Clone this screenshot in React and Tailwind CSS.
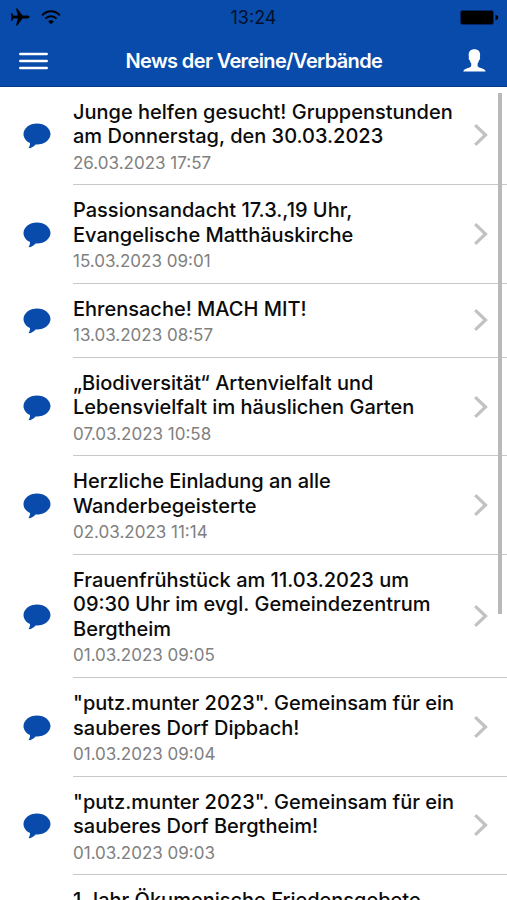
import React from "react";

const news = [
  { lines: ["Junge helfen gesucht! Gruppenstunden", "am Donnerstag, den 30.03.2023"], date: "26.03.2023 17:57" },
  { lines: ["Passionsandacht 17.3.,19 Uhr,", "Evangelische Matthäuskirche"], date: "15.03.2023 09:01" },
  { lines: ["Ehrensache! MACH MIT!"], date: "13.03.2023 08:57" },
  { lines: ["„Biodiversität“ Artenvielfalt und", "Lebensvielfalt im häuslichen Garten"], date: "07.03.2023 10:58" },
  { lines: ["Herzliche Einladung an alle", "Wanderbegeisterte"], date: "02.03.2023 11:14" },
  { lines: ["Frauenfrühstück am 11.03.2023 um", "09:30 Uhr im evgl. Gemeindezentrum", "Bergtheim"], date: "01.03.2023 09:05" },
  { lines: ['"putz.munter 2023". Gemeinsam für ein', "sauberes Dorf Dipbach!"], date: "01.03.2023 09:04" },
  { lines: ['"putz.munter 2023". Gemeinsam für ein', "sauberes Dorf Bergtheim!"], date: "01.03.2023 09:03" },
  { lines: ["1 Jahr Ökumenische Friedensgebete"] },
];

function PlaneIcon() {
  return (
    <svg width="20" height="18" viewBox="0 0 20 18" fill="#000">
      <path d="M19.600 9c0-.8-1.200-1.400-2.400-1.400h-4.700L7.300.5H5.900l2 7.100-4.100.2L2.100 5.200H.9L1.700 9l-.8 3.800h1.200l1.700-2.600 4.100.2-2 7.100h1.400l5.200-7.100h4.700c1.200 0 2.400-.6 2.400-1.400z" />
    </svg>
  );
}

function WifiIcon() {
  return (
    <svg width="20" height="15" viewBox="0 0 20 15" fill="none" stroke="#000" strokeWidth="2">
      <path d="M1.200 5.300C6-.1 14-.1 18.800 5.300" />
      <path d="M4.400 8.600c3.200-3.200 8-3.200 11.200 0" />
      <path d="M10 14.300 7.200 11.400c1.500-1.400 4.100-1.400 5.600 0z" fill="#000" stroke="none" />
    </svg>
  );
}

function BatteryIcon() {
  return (
    <svg width="39" height="15" viewBox="0 0 39 15">
      <rect x="0.500" y="0.500" width="33" height="14" rx="2" fill="#000" stroke="#06266a" />
      <path d="M35.500 4.700c1.500.3 2.800 1.500 2.800 2.800s-1.300 2.500-2.800 2.800z" fill="#000" />
    </svg>
  );
}

function MenuIcon() {
  return (
    <svg width="29" height="18" viewBox="0 0 29 18" stroke="#fff" strokeWidth="2.500" strokeLinecap="round">
      <path d="M1.300 2h26.400M1.300 9h26.400M1.300 16h26.400" />
    </svg>
  );
}

function UserIcon() {
  return (
    <svg className="-mt-px" width="23" height="23" viewBox="0 0 23 23" fill="#fff">
      <path d="M11.400.3c3.700 0 5.700 2.100 5.700 5.400 0 1.500-.1 2.100-.3 3 .7.400.3 1.900-.6 2.400-.4 1.500-.9 2.600-1.600 3.400v2.500c.5 1.600 3.600 2 5.800 3 1.300.6 2 1.400 2.200 2.500H.3c.2-1.100.9-1.900 2.200-2.500 2.200-1 5.200-1.400 5.700-3v-2.500c-.7-.8-1.200-1.900-1.600-3.400-.9-.5-1.300-2-.6-2.400-.2-.9-.3-1.500-.3-3C5.700 2.400 7.700.3 11.400.3z" />
    </svg>
  );
}

function BubbleIcon() {
  return (
    <svg width="28" height="26" viewBox="0 0 28 26" fill="#084bab">
      <path d="M14 .5C6.500.5.500 5.200.500 11c0 3.900 2.500 7.200 6.500 9 .2 1.800-.5 3.600-1.500 5.200 3.200-.3 5.200-1.700 7-3.800l1.500.1c7.500 0 13.500-4.700 13.500-10.500S21.500.5 14 .5z" />
    </svg>
  );
}

function Chevron() {
  return (
    <svg width="14" height="22" viewBox="0 0 14 22" fill="none" stroke="#c2c2c2" strokeWidth="3.200">
      <path d="M1.200 1.200 11.500 11 1.200 20.800" />
    </svg>
  );
}

function NewsRow({ item }) {
  return (
    <li className="flex">
      <div className="flex w-[73px] shrink-0 items-center pt-px pl-[23px]">
        {item.date && <BubbleIcon />}
      </div>
      <div className="flex flex-1 items-center border-b border-[#c8c8c8]">
        <div className="flex-1 whitespace-nowrap pt-[13px] pb-[10px]">
          {item.lines.map((line) => (
            <div key={line} className="text-[20px] leading-[24.500px] font-medium text-[#0b0b0b]">
              {line}
            </div>
          ))}
          {item.date && (
            <div className="mt-[4px] text-[17px] leading-[21.600px] text-[#808080]">{item.date}</div>
          )}
        </div>
        <div className="w-[33px] shrink-0">{item.date && <Chevron />}</div>
      </div>
    </li>
  );
}

export default function App() {
  return (
    <div className="relative flex h-[900px] w-[507px] flex-col overflow-hidden bg-white font-['Inter',sans-serif]">
      <header className="h-[87px] shrink-0 border-b border-[#07398a] bg-[#084bab]">
        <div className="grid h-[34px] grid-cols-3 items-center pr-[8px] pl-[10px]">
          <div className="flex items-center gap-[11px]">
            <PlaneIcon />
            <WifiIcon />
          </div>
          <div className="-ml-[2px] text-center text-[18px] text-[#03102b]">13:24</div>
          <div className="flex justify-end">
            <BatteryIcon />
          </div>
        </div>
        <div className="flex h-[54px] items-center pr-[21px] pl-[19px]">
          <MenuIcon />
          <h1 className="ml-[77.500px] flex-1 text-[20px] font-semibold tracking-[-0.630px] whitespace-nowrap text-white">
            News der Vereine/Verbände
          </h1>
          <UserIcon />
        </div>
      </header>

      <ul className="-mt-[0.500px] flex-1">
        {news.map((item, i) => (
          <NewsRow key={i} item={item} />
        ))}
      </ul>

      {/* scroll indicator */}
      <div className="absolute top-[93px] right-[5px] h-[521px] w-[4px] bg-[#b9b9b9]" />
    </div>
  );
}
